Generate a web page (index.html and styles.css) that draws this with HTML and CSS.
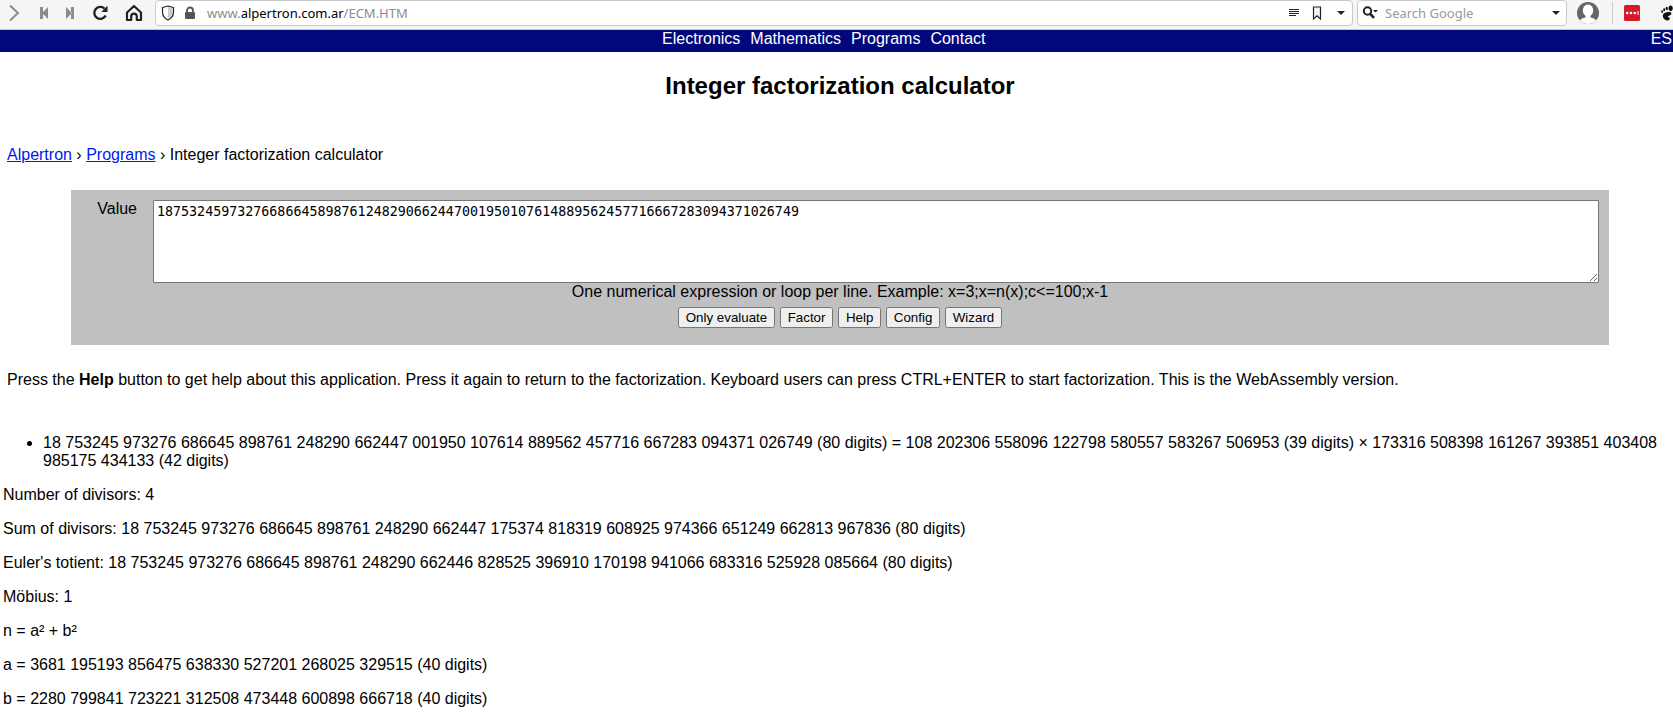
FILE: index.html
```
<!DOCTYPE html>
<html lang="en">
<head>
<meta charset="utf-8">
<title>Integer factorization calculator</title>
<link rel="stylesheet" href="styles.css">
</head>
<body>
<div class="toolbar">
  <div class="tools">
    <button class="tool" type="button" aria-label="Forward"><svg width="16" height="18" viewBox="0 0 16 18"><path d="M4 1.500 12 9 4 16.500" fill="none" stroke="#8c8c8c" stroke-width="2"/></svg></button>
    <button class="tool" type="button" aria-label="Rewind"><svg width="16" height="16" viewBox="0 0 16 16" fill="#8c8c8c"><path d="M4 2h3v12H4zM6 8l4-4 2-2v12l-2-2z"/></svg></button>
    <button class="tool" type="button" aria-label="Fast forward"><svg width="16" height="16" viewBox="0 0 16 16" fill="#8c8c8c"><path d="M9 2h3v12H9zM10 8 6 4 4 2v12l2-2z"/></svg></button>
    <button class="tool" type="button" aria-label="Reload"><svg width="16" height="16" viewBox="0 0 16 16"><path d="M12.500 3.600A6 6 0 1 0 13.700 10.500" fill="none" stroke="#222" stroke-width="2.400"/><path d="M15.500 .8V7H9.300z" fill="#222"/></svg></button>
    <button class="tool" type="button" aria-label="Home"><svg width="18" height="18" viewBox="0 0 18 18" fill="none" stroke="#222" stroke-width="2.200" stroke-linejoin="round"><path d="M2 8.500 9 2l7 6.500V16h-4.200v-3.500a2.800 2.800 0 0 0-5.600 0V16H2z"/></svg></button>
  </div>
  <div class="field address">
    <svg width="14" height="16" viewBox="0 0 14 16"><path d="M7 2v12c3-1.500 4.500-4 4.500-7V3z" fill="#ccc"/><path d="M7 1 12.500 2.500V7c0 3.500-2 6.500-5.500 8C3.500 13.500 1.500 10.500 1.500 7V2.500z" fill="none" stroke="#222" stroke-width="1.200" stroke-linejoin="round"/></svg>
    <svg class="lock" width="12" height="14" viewBox="0 0 12 14"><rect x="1" y="6" width="10" height="7" rx="1" fill="#555"/><path d="M3 7V4.500a3 3 0 0 1 6 0V7" fill="none" stroke="#555" stroke-width="1.800"/></svg>
    <div class="url">www.<span class="host">alpertron.com.ar</span>/ECM.HTM</div>
    <svg width="12" height="12" viewBox="0 0 12 12" stroke="#222" stroke-width="1"><path d="M1 2.500h10M1 4.500h10M1 6.500h10M1 8.500h7"/></svg>
    <svg class="bookmark" width="10" height="14" viewBox="0 0 10 14" fill="#f4f4f4" stroke="#222" stroke-width="1.200"><path d="M1.500 1h7v12L5 9.800 1.500 13z"/></svg>
    <svg width="10" height="6" viewBox="0 0 10 6" fill="#222"><path d="M1 1h8L5 5z"/></svg>
  </div>
  <div class="field search">
    <svg width="17" height="14" viewBox="0 0 17 14"><circle cx="5.500" cy="5" r="3.700" fill="none" stroke="#222" stroke-width="2"/><path d="M8.200 7.800 12 11.800" stroke="#222" stroke-width="2.600"/><path d="M11 4h5l-2.500 2.500z" fill="#222"/></svg>
    <input class="query" type="text" placeholder="Search Google" aria-label="Search Google">
    <svg width="10" height="6" viewBox="0 0 10 6" fill="#222"><path d="M1 1h8L5 5z"/></svg>
  </div>
  <div class="extras">
    <svg width="24" height="24" viewBox="0 0 24 24"><circle cx="12" cy="12" r="11" fill="#666"/><ellipse cx="12" cy="9.500" rx="5.200" ry="6" fill="#fff"/><path d="M9.500 14h5v2.500c3 .5 5 1.500 5.500 3-4 4.600-12 4.600-16 0 .5-1.500 2.500-2.500 5.500-3z" fill="#fff"/></svg>
    <span class="divider"></span>
    <svg class="dots" width="16" height="16" viewBox="0 0 16 16"><rect width="16" height="16" rx="1.500" fill="#d61a2e"/><g fill="#fff"><circle cx="3.200" cy="8" r="1.300"/><circle cx="7" cy="8" r="1.300"/><circle cx="10.800" cy="8" r="1.300"/><path d="M13.500 6h1v4h-1z"/></g></svg>
    <svg width="13" height="16" viewBox="0 0 14 17" fill="#111"><ellipse cx="11.500" cy="3.500" rx="2.200" ry="3"/><ellipse cx="7.300" cy="3.600" rx="1.200" ry="1.900"/><ellipse cx="4.500" cy="5" rx="1.100" ry="1.600"/><ellipse cx="2.300" cy="7" rx="1" ry="1.400"/><path d="M10.500 7.500C6 7.500 3 9 3 11.800 3 14.500 5.300 16.500 7.800 16.500c2 0 3.200-1.300 2.600-2.600-.6-1-1.900-.8-1.900-1.600 0-1 3.700-.8 3.700-2.900 0-1.100-.6-1.900-1.700-1.900z"/></svg>
  </div>
</div>
<nav class="site-nav">
  <div class="sections">
    <a href="#">Electronics</a>
    <a href="#">Mathematics</a>
    <a href="#">Programs</a>
    <a href="#">Contact</a>
  </div>
  <a href="#">ES</a>
</nav>
<main class="page">
  <h1 class="title">Integer factorization calculator</h1>
  <p class="crumbs"><a href="#">Alpertron</a> › <a href="#">Programs</a> › Integer factorization calculator</p>
  <form class="calculator">
    <div class="entry">
      <label for="value">Value</label>
      <textarea class="value" id="value" spellcheck="false">18753245973276686645898761248290662447001950107614889562457716667283094371026749</textarea>
    </div>
    <div class="hint">One numerical expression or loop per line. Example: x=3;x=n(x);c&lt;=100;x-1</div>
    <div class="actions">
      <button type="button">Only evaluate</button>
      <button type="button">Factor</button>
      <button type="button">Help</button>
      <button type="button">Config</button>
      <button type="button">Wizard</button>
    </div>
  </form>
  <p class="note">Press the <b>Help</b> button to get help about this application. Press it again to return to the factorization. Keyboard users can press CTRL+ENTER to start factorization. This is the WebAssembly version.</p>
</main>
<section class="results">
  <ul class="factors">
    <li>18 753245 973276 686645 898761 248290 662447 001950 107614 889562 457716 667283 094371 026749 (80 digits) = 108 202306 558096 122798 580557 583267 506953 (39 digits) × 173316 508398 161267 393851 403408 985175 434133 (42 digits)</li>
  </ul>
  <p>Number of divisors: 4</p>
  <p>Sum of divisors: 18 753245 973276 686645 898761 248290 662447 175374 818319 608925 974366 651249 662813 967836 (80 digits)</p>
  <p>Euler's totient: 18 753245 973276 686645 898761 248290 662446 828525 396910 170198 941066 683316 525928 085664 (80 digits)</p>
  <p>Möbius: 1</p>
  <p>n = a² + b²</p>
  <p>a = 3681 195193 856475 638330 527201 268025 329515 (40 digits)</p>
  <p>b = 2280 799841 723221 312508 473448 600898 666718 (40 digits)</p>
</section>
</body>
</html>
```
FILE: styles.css
```
body {
  margin: 0;
  background: #fff;
  color: #000;
  font: 16px/18px "Liberation Sans", Arial, sans-serif;
}

/* Browser toolbar */
.toolbar {
  display: flex;
  align-items: flex-start;
  height: 29px;
  background: #f5f5f5;
  border-bottom: 1px solid #c8c8cc;
  font: 13px/18px "Noto Sans", sans-serif;
}
.toolbar svg {
  display: block;
  flex: none;
}
.tools {
  display: grid;
  grid-template-columns: 28px 32px 20px 40px 28px;
  height: 26px;
  margin-right: 7px;
}
.tool {
  display: flex;
  align-items: center;
  justify-content: center;
  padding: 0;
  border: 0;
  background: none;
}
.field {
  box-sizing: border-box;
  display: flex;
  align-items: center;
  height: 26px;
  background: #fff;
  border: 1px solid #c8c8c8;
  border-radius: 4px;
}
.address {
  flex: 1;
  padding: 0 6px 0 5px;
}
.lock {
  margin: 0 11px 0 9px;
}
.url {
  flex: 1;
  color: #8c8c8c;
}
.host {
  color: #000;
}
.bookmark {
  margin: 0 14px 0 12px;
}
.search {
  width: 210px;
  margin-left: 4px;
  padding: 0 5px 0 4px;
}
.query {
  flex: 1;
  min-width: 0;
  padding: 0 0 0 6px;
  border: 0;
  outline: 0;
  background: none;
  font: inherit;
}
.query::placeholder {
  color: #999;
}
.extras {
  display: flex;
  align-items: center;
  height: 26px;
  padding-left: 9px;
}
.divider {
  width: 1px;
  height: 22px;
  margin: 0 11px 0 12px;
  background: #ccc;
}
.dots {
  margin-right: 20px;
}

/* Site navigation */
.site-nav {
  display: flex;
  height: 22px;
  padding-right: 1px;
  background: #00087b;
}
.site-nav a {
  color: #fff;
  text-decoration: none;
}
.sections {
  flex: 1;
  display: flex;
  justify-content: center;
  gap: 10px;
  padding-right: 3px;
}

/* Calculator */
.page {
  padding-left: 7px;
}
.title {
  margin: 0;
  padding: 20px 0 46px;
  font-size: 24px;
  line-height: 28px;
  text-align: center;
}
.crumbs {
  margin: 0 0 26px;
}
.crumbs a {
  color: #0019ec;
}
.calculator {
  margin: 0 64px 26px;
  padding: 10px 10px 17px;
  background: #c0c0c0;
}
.entry {
  display: grid;
  grid-template-columns: 56px 1fr;
  column-gap: 16px;
}
.entry label {
  text-align: right;
}
.value {
  box-sizing: border-box;
  width: 100%;
  height: 83px;
  margin: 0;
  padding: 3px;
  border: 1px solid #767676;
  border-radius: 1px;
  font-family: "DejaVu Sans Mono", monospace;
  resize: both;
}
.hint,
.actions {
  text-align: center;
}
.actions {
  padding-top: 6px;
}
.actions button {
  font-family: "Liberation Sans", Arial, sans-serif;
}
.note {
  margin: 0;
}

/* Results */
.results {
  padding: 45px 2px 0 3px;
}
.results p {
  margin: 16px 0 0;
}
.factors {
  margin: 0;
  padding-left: 40px;
}
```
